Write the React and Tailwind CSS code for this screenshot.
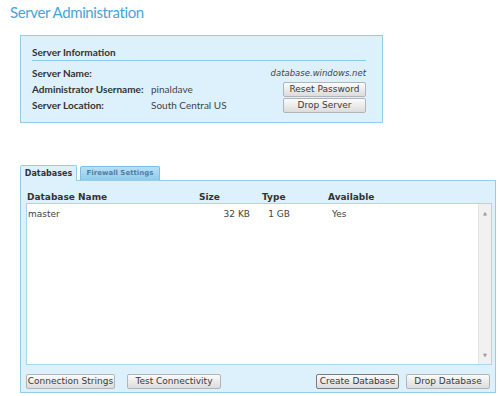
import React from "react";

const seg = { fontFamily: 'Lato, "Open Sans", sans-serif' };
const ver = { fontFamily: '"DejaVu Sans", Verdana, sans-serif' };

const GrayButton = ({ children, className = "", focused = false }) => (
  <button
    className={`h-[15px] whitespace-nowrap rounded-[2px] border ${
      focused ? "border-[#7a7a7a]" : "border-[#b4b4b4]"
    } bg-gradient-to-b from-[#fbfbfb] to-[#dcdcdc] text-[9px] leading-[13px] text-[#3a3a3a] ${className}`}
    style={ver}
  >
    {children}
  </button>
);

const InfoRow = ({ label, value, right }) => (
  <div className="flex h-[16px] items-center whitespace-nowrap">
    <div className="w-[119px] text-[10px] font-bold text-[#333]">{label}</div>
    <div className="flex-1 text-[10px] text-[#444]">{value}</div>
    {right}
  </div>
);

export default function App() {
  return (
    <div className="relative h-[396px] w-[500px] overflow-hidden bg-white">
      {/* title */}
      <h1
        className="pl-[10px] pt-[2px] text-[15px] leading-[20px] tracking-[-0.4px] text-[#4aa2db]"
        style={seg}
      >
        Server Administration
      </h1>

      {/* server info box */}
      <div
        className="ml-[20px] mt-[13px] h-[88px] w-[363px] border border-[#93cde8] bg-[#dcf1fc] pl-[11px] pr-[16px] pt-[10px]"
        style={seg}
      >
        <div className="border-b border-[#8ccbe6] pb-[1px] text-[10px] font-bold leading-[13px] text-[#333]">
          Server Information
        </div>
        <div className="mt-[4px]">
          <InfoRow
            label="Server Name:"
            right={
              <span className="text-[8.5px] italic text-[#444]" style={ver}>
                database.windows.net
              </span>
            }
          />
          <InfoRow
            label="Administrator Username:"
            value="pinaldave"
            right={<GrayButton className="w-[83px]">Reset Password</GrayButton>}
          />
          <InfoRow
            label="Server Location:"
            value="South Central US"
            right={<GrayButton className="w-[83px]">Drop Server</GrayButton>}
          />
        </div>
      </div>

      {/* tabs */}
      <div className="ml-[20px] mt-[42px] flex h-[15px] items-end gap-[3px]" style={ver}>
        <div className="relative z-10 flex h-[16px] w-[57px] items-center justify-center self-start rounded-t-[2px] border border-b-0 border-[#93cde8] bg-[#dcf1fc] text-[8px] font-bold text-[#333]">
          Databases
        </div>
        <div className="flex h-[14px] w-[80px] items-center justify-center rounded-t-[2px] border border-b-0 border-[#7cbfe2] bg-gradient-to-b from-[#b9e0f5] to-[#8fcbec] text-[7px] font-bold text-[#4f7fa3]">
          Firewall Settings
        </div>
      </div>

      {/* tab panel */}
      <div
        className="ml-[20px] h-[213px] w-[476px] border border-[#93cde8] bg-[#dcf1fc] pl-[5px] pr-[3px] pt-[12px]"
        style={ver}
      >
        <div className="flex h-[10px] items-center pl-[1px] text-[9px] font-bold text-[#333]">
          <div className="w-[172px]">Database Name</div>
          <div className="w-[63px]">Size</div>
          <div className="w-[66px]">Type</div>
          <div>Available</div>
        </div>

        <div className="flex h-[162px] border border-[#a9d7ec] bg-white">
          <div className="flex-1 pl-[1px] pt-[5px]">
            <div className="flex h-[12px] items-center text-[9px] text-[#444]">
              <div className="w-[172px]">master</div>
              <div className="w-[50px] text-right">32 KB</div>
              <div className="w-[40px] text-right">1 GB</div>
              <div className="pl-[42px]">Yes</div>
            </div>
          </div>
          <div className="flex w-[13px] flex-col items-center justify-between border-l border-[#e2e2e2] bg-[#f1f1f1] py-[6px] text-[5px] leading-[6px] text-[#999]">
            <span>▲</span>
            <span>▼</span>
          </div>
        </div>

        <div className="mt-[9px] flex items-center">
          <GrayButton className="w-[89px]">Connection Strings</GrayButton>
          <GrayButton className="ml-[12px] w-[94px]">Test Connectivity</GrayButton>
          <GrayButton focused className="ml-auto w-[83px]">
            Create Database
          </GrayButton>
          <GrayButton className="ml-[7px] w-[84px]">Drop Database</GrayButton>
          <div className="w-[2px]" />
        </div>
      </div>
    </div>
  );
}
